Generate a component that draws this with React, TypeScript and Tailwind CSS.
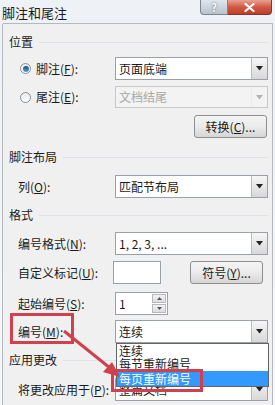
const font = { fontFamily: '"Noto Sans CJK SC", "Liberation Sans", sans-serif' };

function Arrow() {
  return (
    <svg width="7" height="5" viewBox="0 0 7 5">
      <path d="M0 0 H7 L3.5 4.5 Z" fill="#222" />
    </svg>
  );
}

function Combo({ text, disabled = false }: { text: string; disabled?: boolean }) {
  return (
    <div
      className={`ml-auto w-[153px] h-full flex items-stretch border ${
        disabled ? 'border-[#c8c8c8] bg-[#f3f3f3]' : 'border-[#9aa0a8] bg-white'
      }`}
    >
      <div className={`flex-1 flex items-center pl-[3px] text-[12px] ${disabled ? 'text-[#a8a8a8]' : 'text-[#1a1a1a]'}`}>
        {text}
      </div>
      <div
        className={`w-[16px] flex items-center justify-center border-l ${
          disabled ? 'border-[#d8d8d8] opacity-30' : 'border-[#b8bcc2] bg-gradient-to-b from-[#f6f6f6] to-[#d8d8d8]'
        }`}
      >
        <Arrow />
      </div>
    </div>
  );
}

function Btn({ children }: { children: React.ReactNode }) {
  return (
    <div className="w-[73px] h-full mr-[5px] flex items-center justify-center rounded-[3px] border border-[#8e8f8f] bg-gradient-to-b from-[#f4f4f4] via-[#ebebeb] to-[#d6d6d6] text-[12px] text-[#1a1a1a]">
      {children}
    </div>
  );
}

function Section({ label, className }: { label: string; className: string }) {
  return (
    <div className={`flex items-center h-[18px] pl-[6px] pr-[4px] ${className}`}>
      <span className="text-[12px] text-[#1a1a1a]">{label}</span>
      <div className="flex-1 ml-[6px] h-px bg-[#dde3e8]" />
    </div>
  );
}

function Row({ children, className }: { children: React.ReactNode; className: string }) {
  return <div className={`flex items-center h-[23px] pl-[15px] pr-[4px] ${className}`}>{children}</div>;
}

function Label({ text, k }: { text: string; k: string }) {
  return (
    <span className="text-[12px] text-[#1a1a1a] whitespace-nowrap">
      {text}(<span className="underline">{k}</span>):
    </span>
  );
}

function Radio({ checked }: { checked: boolean }) {
  return (
    <div className="w-[11px] h-[11px] rounded-full border border-[#8a9098] bg-gradient-to-b from-[#e8e8e8] to-white flex items-center justify-center mr-[5px] ml-[2px]">
      {checked && <div className="w-[6px] h-[6px] rounded-full bg-gradient-to-b from-[#1d4f7a] to-[#4fa3d8]" />}
    </div>
  );
}

export default function App() {
  return (
    <div className="relative w-[275px] h-[405px] overflow-hidden bg-gradient-to-b from-[#eef2f6] to-[#f6f7f9]" style={font}>
      {/* 标题栏 */}
      <div className="h-[23px] flex items-start">
        <div className="pl-[2px] pt-[3px] text-[13px] text-[#1a1a1a]">脚注和尾注</div>
        <div className="ml-auto mr-[3px] flex">
          <div className="w-[28px] h-[15px] rounded-bl-[4px] border border-t-0 border-[#7c8590] bg-gradient-to-b from-[#dfe5ec] to-[#b9c3ce] flex items-center justify-center text-[11px] font-bold text-white leading-none" style={{ textShadow: '0 0 2px #555' }}>
            ?
          </div>
          <div className="w-[44px] h-[15px] rounded-br-[4px] border border-t-0 border-l-0 border-[#7a3a30] bg-gradient-to-b from-[#e9a190] via-[#cf5a45] to-[#c03c28] flex items-center justify-center">
            <svg width="11" height="9" viewBox="0 0 11 9">
              <path d="M1.5 1 L9.5 8 M9.5 1 L1.5 8" stroke="white" strokeWidth="2.2" strokeLinecap="round" />
            </svg>
          </div>
        </div>
      </div>

      {/* 内容 */}
      <div className="ml-[2px] mr-[2px] h-[400px] border-l border-t border-r border-[#b4b9bf] bg-[#f0f0f0] rounded-tl-[2px]">
        <Section label="位置" className="mt-[9px]" />
        <Row className="mt-[6px]">
          <Radio checked />
          <Label text="脚注" k="F" />
          <Combo text="页面底端" />
        </Row>
        <div className="flex items-center h-[22px] pl-[15px] pr-[4px] mt-[6px]">
          <Radio checked={false} />
          <Label text="尾注" k="E" />
          <Combo text="文档结尾" disabled />
        </div>
        <div className="flex justify-end h-[23px] mt-[7px]">
          <Btn>
            转换(<span className="underline">C</span>)...
          </Btn>
        </div>

        <Section label="脚注布局" className="mt-[10px]" />
        <Row className="mt-[9px]">
          <Label text="列" k="O" />
          <Combo text="匹配节布局" />
        </Row>

        <Section label="格式" className="mt-[8px]" />
        <Row className="mt-[8px]">
          <Label text="编号格式" k="N" />
          <Combo text="1, 2, 3, ..." />
        </Row>
        <Row className="mt-[6px]">
          <Label text="自定义标记" k="U" />
          <div className="ml-auto w-[48px] h-full border border-[#9aa0a8] bg-white" />
          <div className="ml-[29px] h-full flex">
            <Btn>
              符号(<span className="underline">Y</span>)...
            </Btn>
          </div>
        </Row>
        <Row className="mt-[8px]">
          <Label text="起始编号" k="S" />
          <div className="ml-auto mr-[100px] w-[53px] h-full border border-[#9aa0a8] bg-white flex">
            <div className="flex-1 pl-[3px] flex items-center text-[12px] text-[#1a1a1a]">1</div>
            <div className="w-[14px] my-[1px] mr-[1px] flex flex-col gap-px">
              <div className="flex-1 border border-[#b5b9bf] bg-gradient-to-b from-[#f4f4f4] to-[#dcdcdc] flex items-center justify-center">
                <svg width="5" height="3" viewBox="0 0 5 3"><path d="M0 3 H5 L2.5 0 Z" fill="#555" /></svg>
              </div>
              <div className="flex-1 border border-[#b5b9bf] bg-gradient-to-b from-[#f4f4f4] to-[#dcdcdc] flex items-center justify-center">
                <svg width="5" height="3" viewBox="0 0 5 3"><path d="M0 0 H5 L2.5 3 Z" fill="#555" /></svg>
              </div>
            </div>
          </div>
        </Row>
        <Row className="mt-[5px]">
          <Label text="编号" k="M" />
          <Combo text="连续" />
        </Row>

        <Section label="应用更改" className="mt-[8px]" />
        <Row className="mt-[9px]">
          <Label text="将更改应用于" k="P" />
          <Combo text="整篇文档" />
        </Row>
      </div>

      {/* 展开的下拉列表 */}
      <div className="absolute left-[116px] top-[343px] w-[153px] border border-[#646464] bg-white text-[12px] leading-[13px]">
        <div className="pl-[2px] h-[13px] text-[#1a1a1a]">连续</div>
        <div className="pl-[2px] h-[14px] text-[#1a1a1a]">每节重新编号</div>
        <div className="pl-[2px] h-[15px] flex items-center bg-[#3399ff] text-white">每页重新编号</div>
      </div>

      {/* 标注框和箭头 */}
      <div className="absolute left-[10px] top-[313px] w-[64px] h-[31px] border-[3px] border-[#d0404f]" />
      <div className="absolute left-[111px] top-[369px] w-[92px] h-[23px] border-[3px] border-[#d0404f]" />
      <svg className="absolute left-0 top-0" width="275" height="405" viewBox="0 0 275 405">
        <path d="M64 331 L110 368" stroke="#d0404f" strokeWidth="3" />
        <path d="M120 377 L103 372 L112 362 Z" fill="#d0404f" />
      </svg>
    </div>
  );
}
